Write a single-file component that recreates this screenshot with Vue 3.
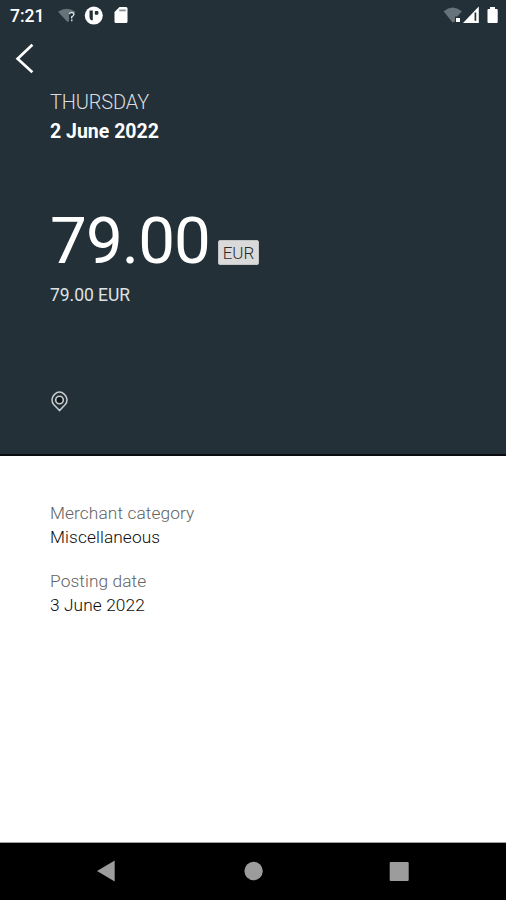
<script setup>
const details = [
  { label: 'Merchant category', value: 'Miscellaneous' },
  { label: 'Posting date', value: '3 June 2022' },
]
</script>

<template>
  <div class="screen">
    <section class="hero">
      <div class="status">
        <span class="clock">7:21</span>
        <svg class="notices" viewBox="56 0 76 32" width="76" height="32">
          <path d="M58 11.8Q66.5 5.6 75.5 11.8L74.5 13Q70 11 69 14.5V21L67.5 22Z" fill="#67737a" />
          <path d="M69.4 14.2Q69.7 12.4 71.6 12.4Q73.9 12.5 73.9 14.5Q73.7 15.7 71.7 16.8V18.4" fill="none" stroke="#dce1e3" stroke-width="1.4" />
          <rect x="71" y="19.6" width="1.5" height="1.6" fill="#dce1e3" />
          <circle cx="93.8" cy="15.6" r="9" fill="#fff" />
          <path d="M89.5 10.6H92.8V20.2H91Q89.5 19 89.5 17Z" fill="#243037" />
          <rect x="94.8" y="11" width="3.6" height="3.8" rx="1" fill="#243037" />
          <path d="M119.5 7H126Q127.5 7 127.5 8.5V21.5Q127.5 23 126 23H116Q114.5 23 114.5 21.5V12Z" fill="#fff" />
          <path d="M119.2 10.4H125.8" stroke="#87909a" stroke-width="1.8" />
        </svg>
        <svg class="signals" viewBox="442 0 58 32" width="58" height="32">
          <path d="M443.6 11.2Q452.5 4 461.8 11.2L457.5 16.6H455V21.5L452.5 22.5Z" fill="#67737a" />
          <rect x="456" y="18" width="4" height="4" fill="#fff" />
          <path d="M478.8 6.5V23H463Z" fill="#fff" />
          <path d="M475.4 12.5V20.8" stroke="#243037" stroke-width="1.7" />
          <path d="M490 7H495V9H496.8Q497.7 9 497.7 10V22Q497.7 23 496.7 23H488.5Q487.5 23 487.5 22V10Q487.5 9 488.4 9H490Z" fill="#fff" />
        </svg>
      </div>
      <svg class="back" viewBox="0 0 24 32" width="24" height="32">
        <path d="M19.4 2.8L4.6 16.7L19.4 30.2" fill="none" stroke="#fff" stroke-width="2.7" />
      </svg>
      <div class="weekday">THURSDAY</div>
      <div class="date">2 June 2022</div>
      <div class="amount">
        <span class="sum">79.00</span>
        <span class="currency">EUR</span>
      </div>
      <div class="original">79.00 EUR</div>
      <svg class="pin" viewBox="0 0 20 24" width="20" height="24">
        <path d="M9.5 20.6L3.7 14.5Q2 12.6 2 9.4Q2.3 6.3 4.8 4.1Q7 2 9.5 2Q12 2 14.2 4.1Q16.7 6.3 17 9.4Q17 12.6 15.3 14.5Z" fill="none" stroke="#c7ccd0" stroke-width="1.5" />
        <circle cx="9.5" cy="10" r="3.8" fill="#10171b" stroke="#c7ccd0" stroke-width="1.6" />
      </svg>
    </section>
    <main class="details">
      <div v-for="item in details" :key="item.label" class="detail">
        <div class="label">{{ item.label }}</div>
        <div class="value">{{ item.value }}</div>
      </div>
    </main>
    <nav class="navbar">
      <svg viewBox="0 0 506 57" width="506" height="57">
        <path d="M97 28L114.7 17.5V38.5Z" fill="#9c9c9c" />
        <circle cx="253.6" cy="28" r="9.2" fill="#9c9c9c" />
        <rect x="389.7" y="19" width="19" height="19" rx="1" fill="#9c9c9c" />
      </svg>
    </nav>
  </div>
</template>

<style>
body {
  margin: 0;
}
</style>

<style scoped>
.screen {
  width: 506px;
  height: 900px;
  display: flex;
  flex-direction: column;
  background: #fff;
  font-family: Roboto, sans-serif;
  overflow: hidden;
}
.hero {
  box-sizing: border-box;
  height: 456px;
  flex: none;
  display: flex;
  flex-direction: column;
  align-items: flex-start;
  background: #243037;
  border-bottom: 2px solid #080c0e;
  color: #fff;
}
.status {
  width: 506px;
  height: 32px;
  display: flex;
  align-items: center;
}
.clock {
  width: 46px;
  padding-left: 10px;
  font-size: 17.5px;
  font-weight: 500;
  line-height: 32px;
}
.signals {
  margin-left: auto;
  margin-right: 6px;
}
.back {
  margin: 10px 0 0 13px;
}
.weekday {
  margin: 16px 0 0 50px;
  font-size: 20px;
  font-weight: 300;
  letter-spacing: -0.15px;
  line-height: 24px;
  color: #d9dde0;
}
.date {
  margin: 6px 0 0 50px;
  font-size: 19.5px;
  font-weight: 700;
  line-height: 24px;
}
.amount {
  margin: 59px 0 0 50px;
  height: 77px;
  display: flex;
  align-items: flex-start;
}
.sum {
  width: 162px;
  font-size: 65.5px;
  letter-spacing: -0.9px;
  line-height: 76px;
}
.currency {
  box-sizing: border-box;
  width: 41px;
  height: 25px;
  margin: 37px 0 0 6px;
  border: 1px solid #c2c5c6;
  border-radius: 2px;
  background: #dadada;
  color: #2c2c2c;
  font-size: 17px;
  font-weight: 300;
  line-height: 25px;
  text-align: center;
}
.original {
  margin: 3px 0 0 50px;
  font-size: 17.5px;
  letter-spacing: -0.05px;
  line-height: 24px;
  color: #dfe2e4;
}
.pin {
  margin: 83px 0 0 50px;
}
.details {
  flex: 1;
  display: flex;
  flex-direction: column;
  gap: 20px;
  padding: 45px 50px 0;
}
.detail {
  font-size: 17.3px;
  font-weight: 300;
  letter-spacing: 0.1px;
  line-height: 24px;
}
.label {
  color: #626262;
}
.value {
  color: #0c0c0c;
}
.navbar {
  height: 58px;
  flex: none;
  background: #000;
  border-top: 1px solid #a0a0a0;
  box-sizing: border-box;
}
.navbar svg {
  display: block;
}
</style>
